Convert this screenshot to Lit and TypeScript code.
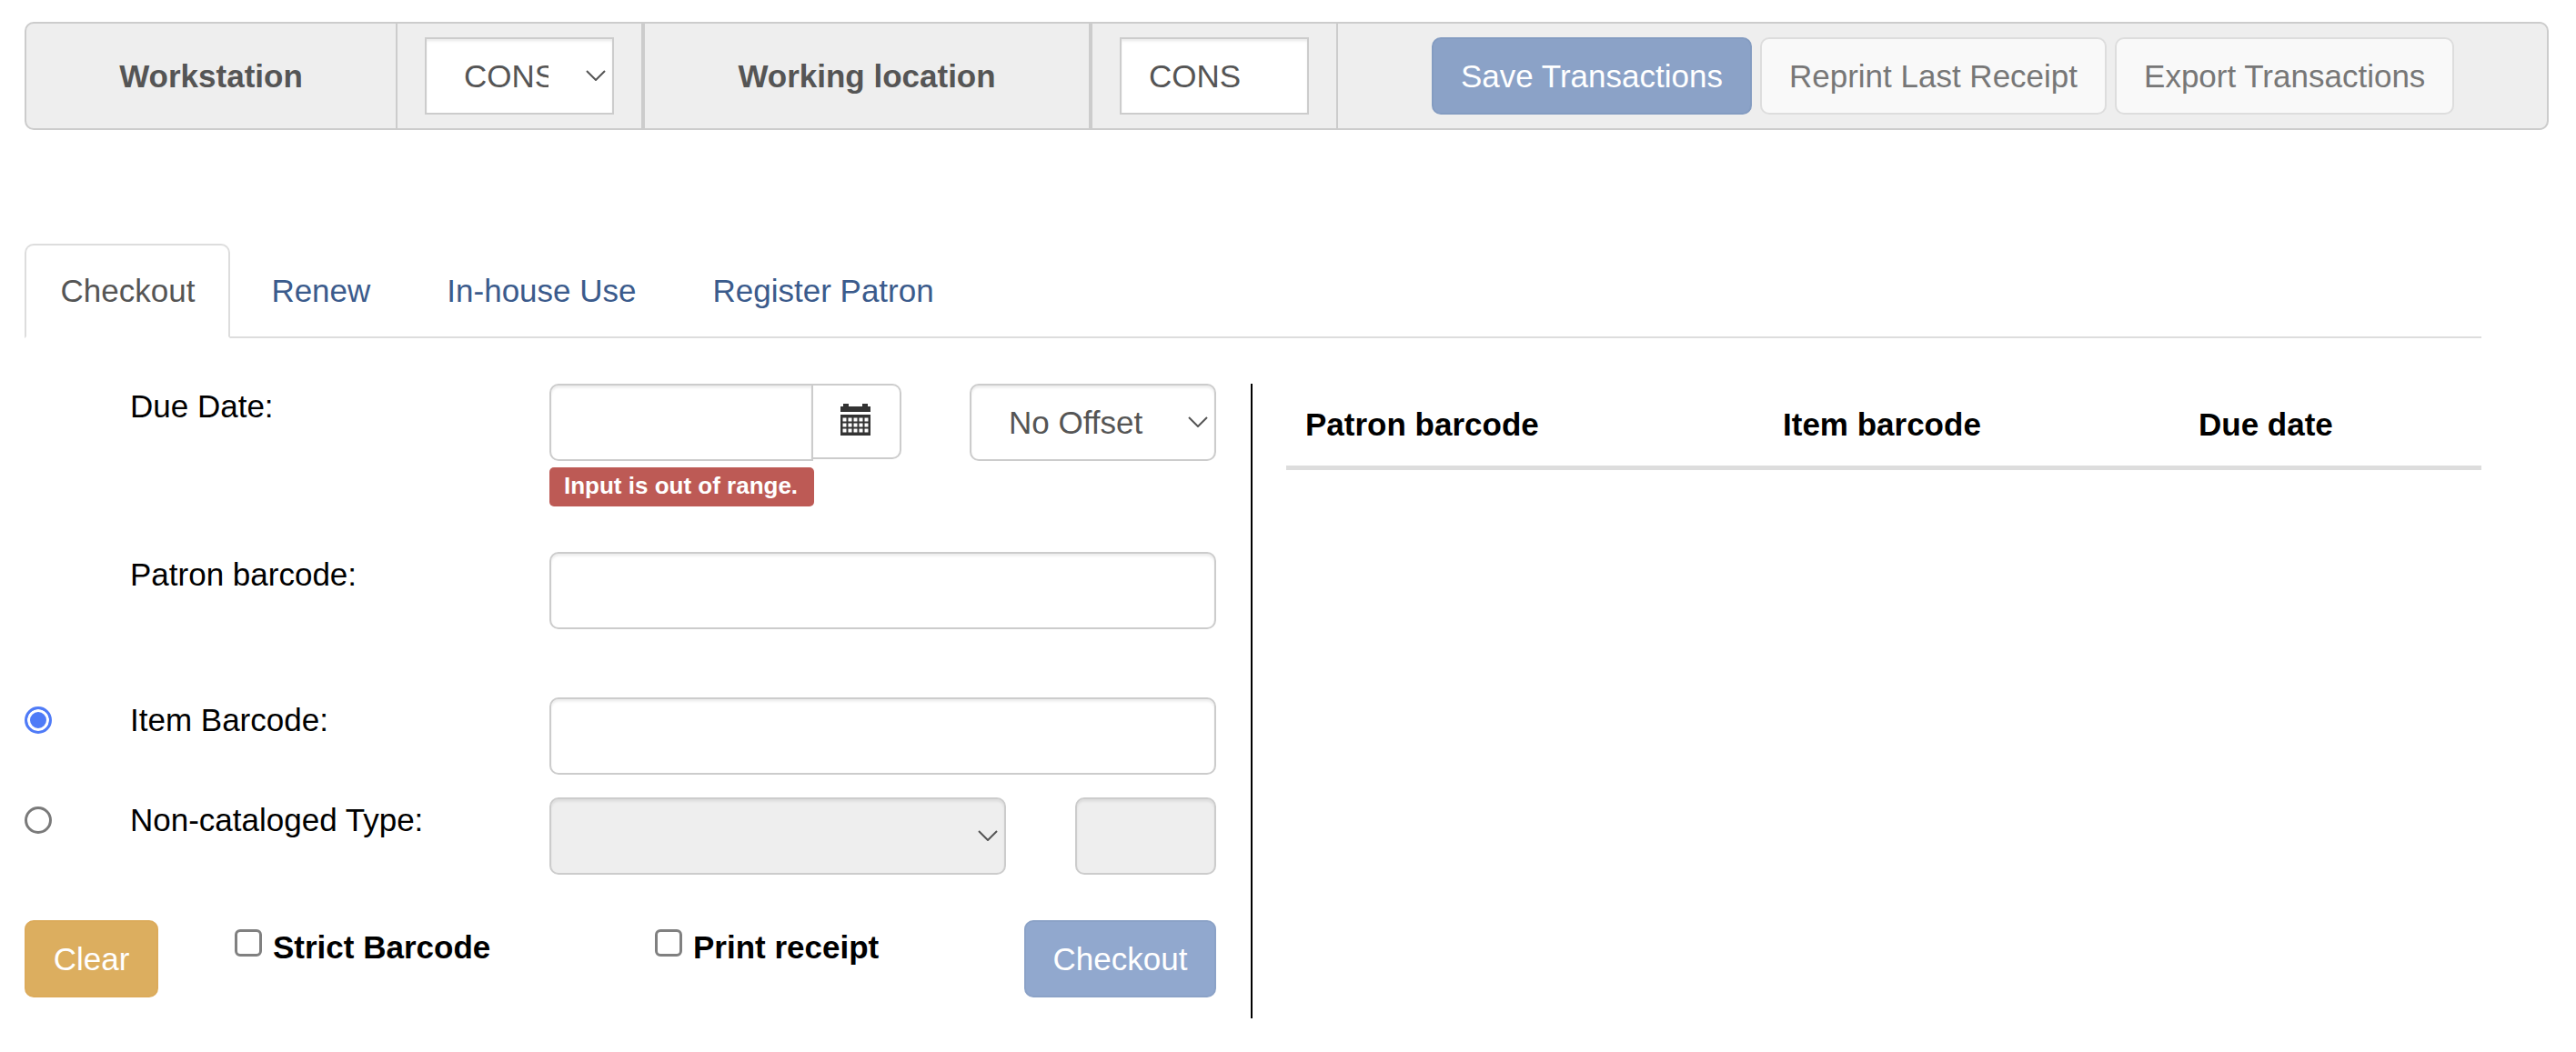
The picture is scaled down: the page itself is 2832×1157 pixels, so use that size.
import { LitElement, html, css, svg } from "lit";
import { customElement } from "lit/decorators.js";

const chevron = html`<svg class="chev" width="22" height="12" viewBox="0 0 22 12" aria-hidden="true"><path d="M1 1 L11 11 L21 1" fill="none" stroke="#555" stroke-width="2"/></svg>`;

const calendarSquares = [17.5, 23.5, 29.5].flatMap((y) =>
  [4.5, 10.5, 16.5, 22.5, 28.5].map(
    (x) => svg`<rect x=${x - 2} y=${y - 2} width="4" height="4" fill="#fff"/>`
  )
);

const calendar = html`<svg width="33" height="35" viewBox="0 0 33 35" aria-hidden="true">
  <rect x="3" y="0" width="6" height="4" fill="#333"/>
  <rect x="24" y="0" width="6" height="4" fill="#333"/>
  <rect x="0" y="3" width="33" height="6" fill="#333"/>
  <rect x="0" y="12" width="33" height="23" fill="#333"/>
  ${calendarSquares}
</svg>`;

@customElement("app-root")
export class AppRoot extends LitElement {
  static styles = css`
    :host {
      display: block;
      box-sizing: border-box;
      padding: 24px 30px 37px 27px;
      font-family: "Liberation Sans", Arial, sans-serif;
      font-size: 35px;
      line-height: 50px;
      color: #000;
    }
    * { box-sizing: border-box; }

    /* toolbar */
    .toolbar {
      display: flex;
      height: 119px;
      background: #eee;
      border: 2px solid #ccc;
      border-radius: 10px;
      margin-bottom: 125px;
    }
    .cell {
      display: flex;
      align-items: center;
      justify-content: center;
      flex: none;
      border-right: 2px solid #ccc;
      color: #555;
      font-weight: 700;
    }
    .cell.thick { border-right-width: 4px; }
    .c-label1 { width: 408px; }
    .c-select { width: 272px; }
    .c-label2 { width: 492px; }
    .c-input { width: 270px; }
    .c-btns {
      flex: 1;
      border-right: 0;
      justify-content: flex-start;
      padding-left: 103px;
      gap: 9px;
    }
    .tb-control {
      width: 208px;
      height: 85px;
      border: 2px solid #ccc;
      border-radius: 0;
      box-shadow: inset 0 2.5px 2.5px rgba(0, 0, 0, 0.075);
      background: #fff;
      color: #555;
      font: 400 35px/50px "Liberation Sans", Arial, sans-serif;
      outline: none;
    }
    input.tb-control { padding: 0 30px; }

    .sel {
      position: relative;
      display: block;
      flex: none;
    }
    .sel select {
      appearance: none;
      -webkit-appearance: none;
      display: block;
      width: 100%;
      height: 85px;
      font: 400 35px/50px "Liberation Sans", Arial, sans-serif;
      color: #555;
      background: #fff;
      border: 2px solid #ccc;
      border-radius: 10px;
      box-shadow: inset 0 2.5px 2.5px rgba(0, 0, 0, 0.075);
      padding: 0 70px 0 41px;
      outline: none;
    }
    .sel select.tb-control { border-radius: 0; }
    .sel select:disabled { background: #eee; opacity: 1; }
    .chev {
      position: absolute;
      right: 9px;
      top: 36px;
      pointer-events: none;
    }

    .btn {
      flex: none;
      height: 85px;
      padding: 0 30px;
      font: 400 35px/50px "Liberation Sans", Arial, sans-serif;
      border: 2px solid transparent;
      border-radius: 10px;
      white-space: nowrap;
    }
    .btn-primary { background: #8ba2c7; border-color: #849cc1; color: #fff; }
    .btn-default { background: #f9f9f9; border-color: #ddd; color: #777; }
    .btn-clear { background: #dcae5f; border-color: #dcab5b; color: #fff; width: 147px; padding: 0; }
    .btn-checkout { background: #91a8ce; border-color: #8ba2c7; color: #fff; width: 211px; padding: 0; }

    /* tabs */
    .tabs {
      display: flex;
      width: 2701px;
      height: 104px;
      border-bottom: 2px solid #ddd;
      margin-bottom: 50px;
    }
    .tab {
      height: 104px;
      padding: 25px 37.5px;
      margin-right: 5px;
      color: #3b5b8c;
      border: 2px solid transparent;
    }
    .tab.active {
      color: #555;
      background: #fff;
      border-color: #ddd;
      border-bottom-color: #fff;
      border-radius: 10px 10px 0 0;
      padding-right: 36.5px;
      margin-right: 6px;
    }

    /* content */
    .content {
      display: grid;
      grid-template-columns: 1310px 1fr;
      width: 2701px;
      column-gap: 38px;
    }
    .row {
      display: grid;
      grid-template-columns: 116px 461px 733px;
    }
    .gap-50 { margin-bottom: 50px; }
    .gap-75 { margin-bottom: 75px; }
    .gap-25 { margin-bottom: 25px; }
    .radio {
      appearance: none;
      -webkit-appearance: none;
      display: block;
      width: 30px;
      height: 30px;
      margin: 10px 0 0;
      border: 3px solid #7a7a7a;
      border-radius: 50%;
      background: #fff;
    }
    .radio:checked {
      border-color: #4f7bf7;
      background: #4f7bf7;
      box-shadow: inset 0 0 0 3px #fff;
    }
    .input {
      display: block;
      width: 100%;
      height: 85px;
      border: 2px solid #ccc;
      border-radius: 10px;
      box-shadow: inset 0 2.5px 2.5px rgba(0, 0, 0, 0.075);
      background: #fff;
      outline: none;
    }
    .input:disabled { background: #eee; opacity: 1; }

    .due {
      display: grid;
      grid-template-columns: 387px 271px;
      column-gap: 75px;
    }
    .group { display: flex; align-items: flex-start; }
    .group .input {
      width: 290px;
      flex: none;
      border-radius: 10px 0 0 10px;
    }
    .addon {
      flex: 1;
      height: 83px;
      display: flex;
      align-items: center;
      justify-content: center;
      border: 2px solid #ccc;
      border-left: 0;
      border-radius: 0 10px 10px 0;
      background: #fff;
    }
    .addon svg { margin: -4px 0 0 -2px; }
    .error {
      display: block;
      width: 291px;
      height: 43px;
      margin-top: 7px;
      background: #bd5a55;
      border-radius: 5px;
      color: #fff;
      font-weight: 700;
      font-size: 26px;
      line-height: 40px;
      padding-left: 16px;
      white-space: nowrap;
      overflow: hidden;
    }
    .noncat {
      display: grid;
      grid-template-columns: 502px 155px;
      column-gap: 76px;
    }
    .footer {
      display: grid;
      grid-template-columns: 231px 462px 1fr auto;
      align-items: start;
    }
    .check {
      display: flex;
      align-items: flex-start;
      gap: 12px;
      font-weight: 700;
      padding-top: 5px;
    }
    .check input {
      appearance: none;
      -webkit-appearance: none;
      width: 30px;
      height: 30px;
      margin: 5px 0 0;
      flex: none;
      border: 3px solid #808080;
      border-radius: 6px;
      background: #fff;
    }

    /* right */
    .right {
      border-left: 2px solid #000;
      padding-left: 37px;
      height: 698px;
    }
    .thead {
      display: grid;
      grid-template-columns: 526px 457px 1fr;
      border-bottom: 5px solid #ddd;
      padding: 20px 0;
      font-weight: 700;
    }
    .thead span { padding-left: 20px; }
    .thead span:first-child { padding-left: 21px; }
  `;

  render() {
    return html`
      <div class="toolbar">
        <div class="cell c-label1">Workstation</div>
        <div class="cell c-select thick">
          <label class="sel" style="width:208px">
            <select class="tb-control" aria-label="Workstation"><option>CONS</option></select>
            ${chevron}
          </label>
        </div>
        <div class="cell c-label2 thick">Working location</div>
        <div class="cell c-input"><input class="tb-control" .value=${"CONS"} aria-label="Working location" /></div>
        <div class="cell c-btns">
          <button class="btn btn-primary">Save Transactions</button>
          <button class="btn btn-default">Reprint Last Receipt</button>
          <button class="btn btn-default">Export Transactions</button>
        </div>
      </div>

      <div class="tabs">
        <div class="tab active">Checkout</div>
        <div class="tab">Renew</div>
        <div class="tab">In-house Use</div>
        <div class="tab">Register Patron</div>
      </div>

      <div class="content">
        <div class="left">
          <div class="row gap-50">
            <span></span>
            <div>Due Date:</div>
            <div>
              <div class="due">
                <div class="group">
                  <input class="input" aria-label="Due Date" />
                  <div class="addon">${calendar}</div>
                </div>
                <label class="sel">
                  <select aria-label="Offset"><option>No Offset</option></select>
                  ${chevron}
                </label>
              </div>
              <div class="error">Input is out of range.</div>
            </div>
          </div>

          <div class="row gap-75">
            <span></span>
            <div>Patron barcode:</div>
            <input class="input" aria-label="Patron barcode" />
          </div>

          <div class="row gap-25">
            <div><input class="radio" type="radio" name="mode" checked aria-label="Item Barcode" /></div>
            <div>Item Barcode:</div>
            <input class="input" aria-label="Item Barcode" />
          </div>

          <div class="row gap-50">
            <div><input class="radio" type="radio" name="mode" aria-label="Non-cataloged Type" /></div>
            <div>Non-cataloged Type:</div>
            <div class="noncat">
              <label class="sel">
                <select disabled aria-label="Non-cataloged Type"></select>
                ${chevron}
              </label>
              <input class="input" disabled aria-label="Count" />
            </div>
          </div>

          <div class="footer">
            <button class="btn btn-clear">Clear</button>
            <label class="check"><input type="checkbox" />Strict Barcode</label>
            <label class="check"><input type="checkbox" />Print receipt</label>
            <button class="btn btn-checkout">Checkout</button>
          </div>
        </div>

        <div class="right">
          <div class="thead">
            <span>Patron barcode</span>
            <span>Item barcode</span>
            <span>Due date</span>
          </div>
        </div>
      </div>
    `;
  }
}
